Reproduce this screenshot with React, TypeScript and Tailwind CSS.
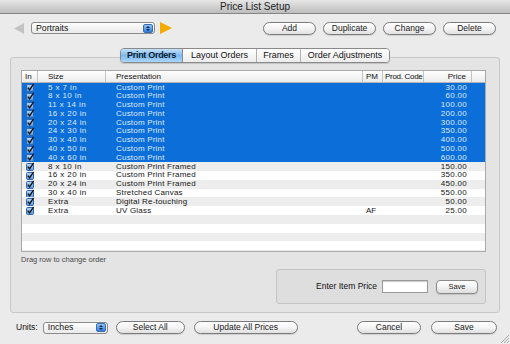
import React from "react";

const rows: { size: string; pres: string; pm?: string; price: string; sel: boolean }[] = [
  { size: "5 x 7 in", pres: "Custom Print", price: "30.00", sel: true },
  { size: "8 x 10 in", pres: "Custom Print", price: "60.00", sel: true },
  { size: "11 x 14 in", pres: "Custom Print", price: "100.00", sel: true },
  { size: "16 x 20 in", pres: "Custom Print", price: "200.00", sel: true },
  { size: "20 x 24 in", pres: "Custom Print", price: "300.00", sel: true },
  { size: "24 x 30 in", pres: "Custom Print", price: "350.00", sel: true },
  { size: "30 x 40 in", pres: "Custom Print", price: "400.00", sel: true },
  { size: "40 x 50 in", pres: "Custom Print", price: "500.00", sel: true },
  { size: "40 x 60 in", pres: "Custom Print", price: "600.00", sel: true },
  { size: "8 x 10 in", pres: "Custom Print Framed", price: "150.00", sel: false },
  { size: "16 x 20 in", pres: "Custom Print Framed", price: "350.00", sel: false },
  { size: "20 x 24 in", pres: "Custom Print Framed", price: "450.00", sel: false },
  { size: "30 x 40 in", pres: "Stretched Canvas", price: "550.00", sel: false },
  { size: "Extra", pres: "Digital Re-touching", price: "50.00", sel: false },
  { size: "Extra", pres: "UV Glass", pm: "AF", price: "25.00", sel: false },
];

const cols = "grid grid-cols-[16px_68px_257px_20px_41px_48px_1fr]";

function Check() {
  return (
    <svg width="9" height="9" viewBox="0 0 9 9">
      <defs>
        <linearGradient id="cb" x1="0" y1="0" x2="0" y2="1">
          <stop offset="0" stopColor="#bcdaf8" />
          <stop offset="1" stopColor="#4d97e6" />
        </linearGradient>
      </defs>
      <rect x="0.5" y="1.5" width="7" height="7" rx="1.2" fill="url(#cb)" stroke="#3565a8" />
      <path d="M1.8 4.6 L3.6 6.8 L7.6 0.8" fill="none" stroke="#111" strokeWidth="1.4" />
    </svg>
  );
}

function Aqua({ label, w }: { label: string; w: string }) {
  return (
    <div
      className={`${w} h-[13px] rounded-full border border-[#7b7b7b] bg-linear-to-b from-white via-[#f4f4f4] to-[#e0e0e0] flex items-center justify-center text-[8.5px] leading-none text-[#1a1a1a] whitespace-nowrap shadow-[0_1px_1px_rgba(0,0,0,0.12)]`}
    >
      {label}
    </div>
  );
}

function Stepper() {
  return (
    <div className="w-[10px] h-[9px] rounded-[2px] bg-linear-to-b from-[#8fc3f5] to-[#2f7fdc] border border-[#3a6db0] flex flex-col items-center justify-center gap-[1px]">
      <svg width="4" height="2" viewBox="0 0 4 2"><path d="M0 2 L2 0 L4 2Z" fill="#0d2540" /></svg>
      <svg width="4" height="2" viewBox="0 0 4 2"><path d="M0 0 L2 2 L4 0Z" fill="#0d2540" /></svg>
    </div>
  );
}

function Popup({ label, w }: { label: string; w: string }) {
  return (
    <div
      className={`${w} h-[12px] rounded-[3px] border border-[#8a8a8a] bg-linear-to-b from-white to-[#e9e9e9] flex items-center justify-between pl-[4px] pr-[1px] text-[8.7px] leading-none text-[#111]`}
    >
      <span>{label}</span>
      <Stepper />
    </div>
  );
}

export default function App() {
  const empty = Array.from({ length: 6 });
  return (
    <div
      className="relative w-[510px] h-[344px] overflow-hidden bg-[#ebebeb] flex flex-col text-[#111]"
      style={{ fontFamily: '"Liberation Sans", Arial, sans-serif' }}
    >
      {/* Title bar */}
      <div className="h-[14px] shrink-0 bg-linear-to-b from-[#e6e6e6] to-[#bdbdbd] border-b border-[#858585] flex items-center justify-center text-[10px] leading-none text-[#222]">
        Price List Setup
      </div>

      {/* Toolbar */}
      <div className="mt-[8px] h-[12px] flex items-center pl-[14px] pr-[14px]">
        <svg width="10" height="11" viewBox="0 0 10 11"><path d="M10 0 L0 5.5 L10 11Z" fill="#c3c3c3" /></svg>
        <div className="ml-[7px]">
          <Popup label="Portraits" w="w-[124px]" />
        </div>
        <svg className="ml-[5px]" width="12" height="12" viewBox="0 0 12 12"><path d="M0 0 L12 6 L0 12Z" fill="#f2a900" /></svg>
        <div className="ml-auto flex gap-[7px]">
          <Aqua label="Add" w="w-[53px]" />
          <Aqua label="Duplicate" w="w-[53px]" />
          <Aqua label="Change" w="w-[53px]" />
          <Aqua label="Delete" w="w-[53px]" />
        </div>
      </div>

      {/* Tabs */}
      <div className="relative z-10 mt-[14px] h-[15px] flex justify-center">
        <div className="flex h-[15px] rounded-[4px] border border-[#8a8a8a] overflow-hidden text-[9px] leading-none whitespace-nowrap shadow-[0_1px_1px_rgba(0,0,0,0.15)]">
          <div className="w-[62px] flex items-center justify-center bg-linear-to-b from-[#c4e1fb] via-[#7cb9f1] to-[#a9d6fb] text-[#0b1a2c] font-bold tracking-[-0.3px] border-r border-[#8a8a8a]">
            Print Orders
          </div>
          <div className="w-[74px] flex items-center justify-center bg-linear-to-b from-white to-[#ececec] border-r border-[#b0b0b0]">
            Layout Orders
          </div>
          <div className="w-[44px] flex items-center justify-center bg-linear-to-b from-white to-[#ececec] border-r border-[#b0b0b0]">
            Frames
          </div>
          <div className="w-[88px] flex items-center justify-center bg-linear-to-b from-white to-[#ececec]">
            Order Adjustments
          </div>
        </div>
      </div>

      {/* Panel */}
      <div className="-mt-[6px] ml-[10px] w-[490px] h-[256px] rounded-[3px] border border-[#c9c9c9] bg-[#e4e4e4] pt-[12px] pl-[10px] flex flex-col">
        {/* Table */}
        <div className="w-[465px] h-[182px] border border-[#a9a9a9] bg-white flex flex-col overflow-hidden whitespace-nowrap">
          <div className={`${cols} h-[12px] shrink-0 border-b border-[#b4b4b4] bg-linear-to-b from-white to-[#ebebeb] text-[8px] leading-none text-[#111]`}>
            <div className="flex items-center pl-[3px] border-r border-[#c4c4c4]">In</div>
            <div className="flex items-center pl-[10px] border-r border-[#c4c4c4]">Size</div>
            <div className="flex items-center pl-[10px] border-r border-[#c4c4c4]">Presentation</div>
            <div className="flex items-center pl-[3px] border-r border-[#c4c4c4]">PM</div>
            <div className="flex items-center pl-[2px] border-r border-[#c4c4c4] tracking-[-0.3px] overflow-hidden">Prod. Code</div>
            <div className="flex items-center justify-end pr-[5px] border-r border-[#c4c4c4]">Price</div>
            <div />
          </div>
          <div className="flex-1 flex flex-col overflow-hidden">
            {rows.map((r, i) => (
              <div
                key={i}
                className={`${cols} h-[8.8px] shrink-0 text-[8px] leading-none ${
                  r.sel ? "bg-[#0c6fd9] text-[#dce9fb]" : i % 2 === 1 ? "bg-[#ededed] text-[#151515]" : "bg-white text-[#151515]"
                }`}
              >
                <div className="flex items-center pl-[4px]">
                  <Check />
                </div>
                <div className="flex items-center pl-[10px] tracking-[0.4px]">{r.size}</div>
                <div className="flex items-center pl-[10px] tracking-[0.2px]">{r.pres}</div>
                <div className="flex items-center pl-[3px]">{r.pm ?? ""}</div>
                <div />
                <div className="flex items-center justify-end pr-[5px] tracking-[0.3px]">{r.price}</div>
                <div />
              </div>
            ))}
            {empty.map((_, j) => (
              <div
                key={"e" + j}
                className={`h-[8.8px] shrink-0 ${(rows.length + j) % 2 === 1 ? "bg-[#ededed]" : "bg-white"}`}
              />
            ))}
          </div>
        </div>

        <div className="mt-[3px] h-[9px] flex items-center text-[7.5px] leading-none text-[#4a4a4a]">
          Drag row to change order
        </div>

        {/* Enter item price */}
        <div className="mt-[5px] ml-[255px] w-[210px] h-[35px] rounded-[3px] border border-[#c4c4c4] bg-[#dedede] flex items-center pr-[7px]">
          <span className="ml-auto text-[8.5px] leading-none text-[#111]">Enter Item Price</span>
          <div className="ml-[5px] w-[46px] h-[13px] bg-white border border-[#9a9a9a] shadow-[inset_0_1px_1px_rgba(0,0,0,0.2)]" />
          <div className="ml-[8px] w-[42px] h-[14px] rounded-[4px] border border-[#8a8a8a] bg-linear-to-b from-white via-[#f3f3f3] to-[#dcdcdc] flex items-center justify-center text-[7.5px] leading-none text-[#222] shadow-[0_1px_1px_rgba(0,0,0,0.12)]">
            Save
          </div>
        </div>
      </div>

      {/* Bottom bar */}
      <div className="mt-[8px] h-[13px] flex items-center pl-[16px] pr-[13px]">
        <span className="text-[8.5px] leading-none text-[#111]">Units:</span>
        <div className="ml-[5px]">
          <Popup label="Inches" w="w-[65px]" />
        </div>
        <div className="ml-[8px]">
          <Aqua label="Select All" w="w-[69px]" />
        </div>
        <div className="ml-[9px]">
          <Aqua label="Update All Prices" w="w-[104px]" />
        </div>
        <div className="ml-auto flex gap-[10px]">
          <Aqua label="Cancel" w="w-[64px]" />
          <Aqua label="Save" w="w-[66px]" />
        </div>
      </div>

      {/* Resize grip */}
      <svg className="absolute right-[1px] bottom-[1px]" width="9" height="9" viewBox="0 0 9 9">
        <path d="M9 1 L1 9 M9 4 L4 9 M9 7 L7 9" stroke="#9a9a9a" strokeWidth="0.8" />
      </svg>
    </div>
  );
}
